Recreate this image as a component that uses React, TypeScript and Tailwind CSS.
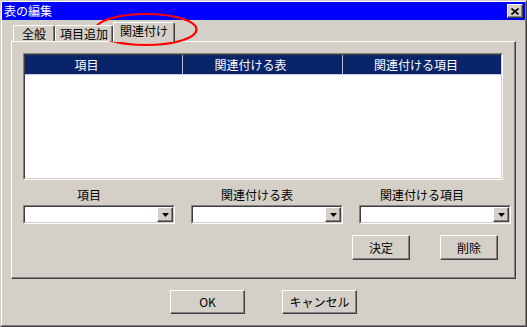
import React from 'react'

// Windows classic 3D borders
const raised = 'border border-t-white border-l-white border-r-[#404040] border-b-[#404040] shadow-[inset_-1px_-1px_0_#808080]'

function Sunken({ className, children }: { className?: string; children?: React.ReactNode }) {
  return (
    <div className={`border border-t-[#808080] border-l-[#808080] border-r-white border-b-white ${className ?? ''}`}>
      <div className="w-full h-full border border-t-[#404040] border-l-[#404040] border-r-[#d4d0c8] border-b-[#d4d0c8] bg-white">
        {children}
      </div>
    </div>
  )
}

function Combo() {
  return (
    <Sunken className="w-[152px] h-[19px]">
      <div className="flex justify-end h-full">
        <div className={`w-[16px] h-full bg-[#d4d0c8] flex items-center justify-center ${raised}`}>
          <svg width="7" height="4" viewBox="0 0 7 4">
            <polygon points="0,0 7,0 3.5,4" fill="#000" />
          </svg>
        </div>
      </div>
    </Sunken>
  )
}

function Button({ label, w, h }: { label: string; w: string; h: string }) {
  return (
    <div className={`${w} ${h} bg-[#d4d0c8] flex items-center justify-center leading-none ${raised}`}>
      {label}
    </div>
  )
}

export default function App() {
  const tabs = [
    { label: '全般', w: 'w-[42px]', active: false },
    { label: '項目追加', w: 'w-[58px]', active: false },
    { label: '関連付け', w: 'w-[62px]', active: true },
  ]
  const columns = [
    { label: '項目', cls: 'w-[158px] border-r border-[#b8bccc] pr-[34px]' },
    { label: '関連付ける表', cls: 'w-[160px] border-r border-[#b8bccc] pr-[24px]' },
    { label: '関連付ける項目', cls: 'flex-1 pr-[12px]' },
  ]
  const labels = [
    { label: '項目', cls: 'pr-[20px]' },
    { label: '関連付ける表', cls: 'pr-[20px]' },
    { label: '関連付ける項目', cls: 'pr-[26px]' },
  ]

  return (
    <div className="relative w-[527px] h-[327px] bg-[#d4d0c8] text-[12px] text-black font-['Noto_Sans_CJK_JP','Liberation_Sans',sans-serif]">
      <div className="w-full h-full border border-t-[#d4d0c8] border-l-[#d4d0c8] border-r-[#404040] border-b-[#404040]">
        <div className="w-full h-full border border-t-white border-l-white border-r-[#808080] border-b-[#808080] flex flex-col">
          {/* title bar */}
          <div className="h-[18px] bg-[#0000ff] flex items-center justify-between pl-[2px] pr-[2px]">
            <span className="text-white leading-none">表の編集</span>
            <div className={`w-[16px] h-[14px] bg-[#d4d0c8] flex items-center justify-center ${raised}`}>
              <svg width="8" height="7" viewBox="0 0 8 7">
                <path d="M0.5 0.5 L7.5 6.5 M7.5 0.5 L0.5 6.5" stroke="#000" strokeWidth="1.6" />
              </svg>
            </div>
          </div>

          {/* tabs */}
          <div className="h-[21px] pl-[11px] flex items-end relative z-10">
            {tabs.map((t) =>
              t.active ? (
                <div
                  key={t.label}
                  className={`${t.w} h-[20px] -mb-[1px] bg-[#d4d0c8] rounded-t-[2px] border-t border-l border-r border-t-white border-l-white border-r-[#404040] shadow-[inset_-1px_0_0_#808080] flex items-start justify-center pt-[1px] leading-[14px]`}
                >
                  {t.label}
                </div>
              ) : (
                <div
                  key={t.label}
                  className={`${t.w} h-[16px] bg-[#d4d0c8] rounded-t-[2px] border-t border-l border-r border-t-white border-l-white border-r-[#404040] shadow-[inset_-1px_0_0_#808080] flex items-center justify-center leading-none`}
                >
                  {t.label}
                </div>
              )
            )}
          </div>

          {/* panel */}
          <div className="mx-[9px] h-[238px] border border-t-white border-l-white border-r-[#404040] border-b-[#404040] shadow-[inset_-1px_-1px_0_#808080] pl-[11px] pt-[11px]">
            <Sunken className="w-[480px] h-[127px]">
              <div className="h-[20px] bg-[#0a246a] text-white flex border-b border-[#c8ccd8]">
                {columns.map((c) => (
                  <div key={c.label} className={`${c.cls} h-full flex items-center justify-center leading-none`}>
                    {c.label}
                  </div>
                ))}
              </div>
            </Sunken>

            <div className="mt-[8px] flex gap-[16px]">
              {labels.map((l) => (
                <div key={l.label} className={`w-[152px] h-[14px] leading-[14px] text-center ${l.cls}`}>
                  {l.label}
                </div>
              ))}
            </div>

            <div className="mt-[3px] flex gap-[16px]">
              <Combo />
              <Combo />
              <Combo />
            </div>

            <div className="mt-[11px] flex justify-end gap-[30px] pr-[17px]">
              <Button label="決定" w="w-[58px]" h="h-[25px]" />
              <Button label="削除" w="w-[58px]" h="h-[25px]" />
            </div>
          </div>

          {/* dialog buttons */}
          <div className="mt-[11px] flex justify-center gap-[37px]">
            <Button label="OK" w="w-[75px]" h="h-[24px]" />
            <Button label="キャンセル" w="w-[75px]" h="h-[24px]" />
          </div>
        </div>
      </div>

      {/* red annotation circle */}
      <svg className="absolute left-[94px] top-[12px] pointer-events-none" width="104" height="35" viewBox="0 0 104 35">
        <ellipse cx="52" cy="17.5" rx="50.5" ry="15.5" fill="none" stroke="#ff0000" strokeWidth="2.2" />
      </svg>
    </div>
  )
}
